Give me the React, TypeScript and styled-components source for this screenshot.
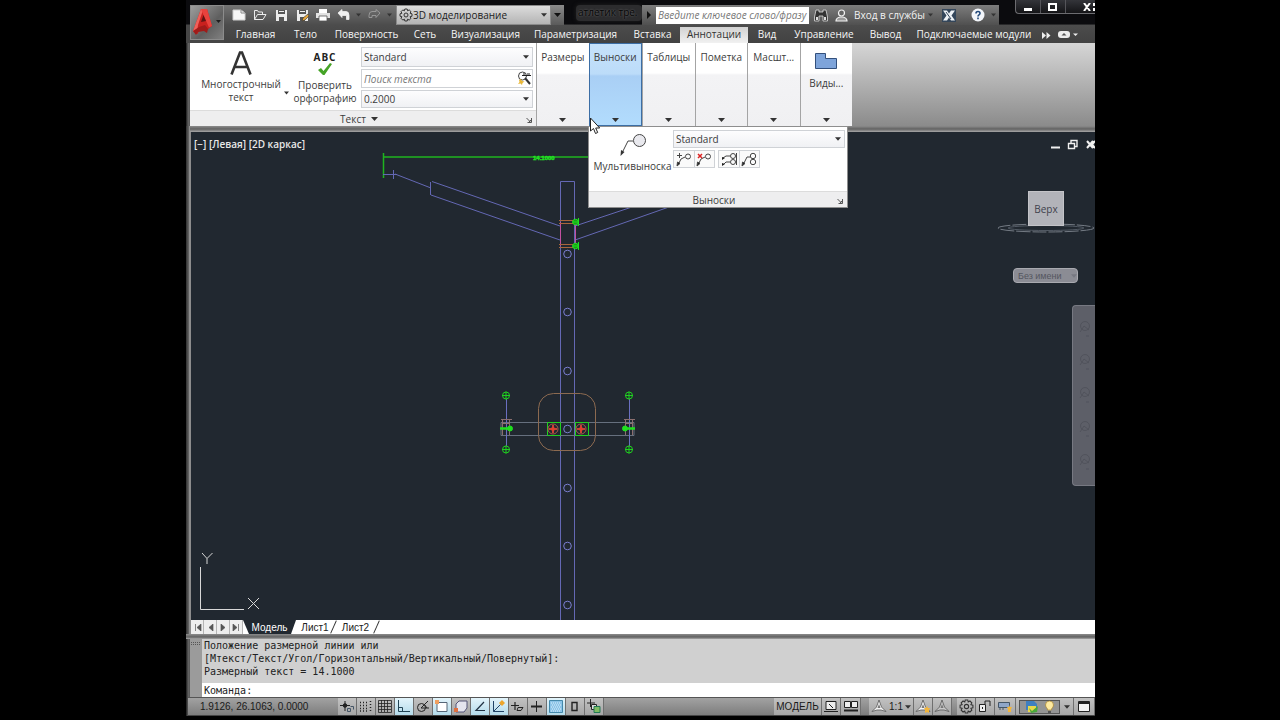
import React from "react";
import styled, { createGlobalStyle, css } from "styled-components";

const UI = `"Open Sans", "Noto Sans", sans-serif`;
const MONO = `"DejaVu Sans Mono", "Liberation Mono", monospace`;
const INK = "#3c3c3c";

const GlobalStyle = createGlobalStyle`
  * { box-sizing: border-box; }
  body { margin: 0; background: #000; font-family: ${UI}; font-size: 10px; line-height: 14px; color: ${INK}; }
  button, select, input { font: inherit; color: inherit; margin: 0; padding: 0; border: 0; background: none; border-radius: 0; }
  svg { display: block; flex: none; }
`;

const Page = styled.div`
  min-height: 100vh;
  display: flex;
  flex-direction: column;
  padding: 0 185px 4px 186px;
  background: #000;
`;

const Window = styled.main`
  flex: 1;
  display: flex;
  flex-direction: column;
  min-width: 0;
  position: relative;
  overflow: hidden;
  background: linear-gradient(90deg, #1c1c1c, #5a5a5a 2px, #6a6a6a 3px, #4a4a4a 4px);
`;

/* ---------- title bar and tabs ---------- */

const Header = styled.header`
  display: flex;
  height: 43px;
  padding: 5px 0 0 4px;
  background: linear-gradient(#0b0b0e 0, #0b0b0e 24px, #464646 25px);
`;

const AppButton = styled.button`
  width: 34px;
  height: 35px;
  flex: none;
  display: flex;
  align-items: center;
  border: 1px solid #8c8c8c;
  background: linear-gradient(135deg, #9d9d9d, #5f5f5f 60%, #808080);
`;

const HeaderRows = styled.div`
  flex: 1;
  min-width: 0;
  display: flex;
  flex-direction: column;
`;

const TitleRow = styled.div`
  height: 20px;
  display: flex;
  align-items: stretch;
`;

const QuickAccess = styled.div`
  width: 172px;
  flex: none;
  display: flex;
  align-items: center;
  gap: 7px;
  padding-left: 8px;
  background: linear-gradient(#747474, #4c4c4c);
`;

const IconButton = styled.button<{ $w?: number }>`
  width: ${(p) => p.$w ?? 14}px;
  height: 16px;
  flex: none;
  display: flex;
  align-items: center;
  justify-content: center;
`;

const SelectBox = styled.label<{ $w?: number; $h: number; $gray?: boolean; $pad?: number }>`
  position: relative;
  display: flex;
  align-items: center;
  flex: none;
  width: ${(p) => (p.$w ? `${p.$w}px` : "100%")};
  height: ${(p) => p.$h}px;
  color: ${(p) => (p.$gray ? "#222" : INK)};
  border: 1px solid ${(p) => (p.$gray ? "#8a8a8a" : "#cfd2d6")};
  background: ${(p) => (p.$gray ? "linear-gradient(#dcdcdc, #b4b4b4)" : "linear-gradient(#fdfdfe, #f0f1f4)")};
  select {
    appearance: none;
    width: 100%;
    height: 100%;
    padding-left: ${(p) => p.$pad ?? 2}px;
    outline: none;
  }
  > svg:last-child { position: absolute; right: 3px; }
  > svg:first-child:not(:last-child) { position: absolute; left: 2px; }
`;

const MoreButton = styled.button`
  width: 13px;
  flex: none;
  display: flex;
  align-items: center;
  justify-content: center;
  background: linear-gradient(#8b8b8b, #5a5a5a);
`;

const TitleText = styled.div`
  width: 66px;
  height: 16px;
  flex: none;
  margin: 0 auto 0 12px;
  padding: 0 2px;
  overflow: hidden;
  white-space: nowrap;
  background: #2c2c2e;
  color: #050505;
  border-radius: 4px;
  box-shadow: 0 0 4px #222;
  text-shadow: 0 0 2px #777;
`;

const InfoBar = styled.div`
  display: flex;
  align-items: center;
  width: 357px;
  flex: none;
  margin-right: 96px;
  color: #f2f2f2;
  background: linear-gradient(#7d7d7d, #505050);
`;

const KeywordInput = styled.input`
  width: 153px;
  flex: none;
  height: 17px;
  padding-left: 2px;
  background: #fff;
  font-style: italic;
  color: #444;
  outline: none;
  &::placeholder { color: #777; opacity: 1; }
`;

const SignIn = styled.button`
  display: flex;
  align-items: center;
  gap: 6px;
  width: 93px;
  flex: none;
  margin-left: 2px;
  white-space: nowrap;
`;

const WindowButtons = styled.div`
  position: absolute;
  right: 0;
  top: 0;
  display: flex;
  width: 80px;
  height: 14px;
  border: 1px solid #6c6c70;
  border-width: 0 0 1px 1px;
  border-radius: 0 0 0 4px;
  background: linear-gradient(#34353a, #141417);
  button { width: 25px; display: flex; align-items: center; justify-content: center; border-right: 1px solid #55555a; }
  button:last-child { flex: 1; border: 0; justify-content: flex-end; }
`;

const TabRow = styled.nav`
  display: flex;
  align-items: flex-end;
  height: 18px;
  padding-left: 4px;
  background: linear-gradient(#4c4c4c, #424242);
`;

const Tab = styled.button<{ $active?: boolean; $w: number }>`
  width: ${(p) => p.$w}px;
  flex: none;
  height: 16px;
  line-height: 14px;
  white-space: nowrap;
  display: flex;
  justify-content: center;
  color: #f6f6f6;
  ${(p) =>
    p.$active &&
    css`
      color: #333;
      background: linear-gradient(#d2d2d2, #f1f1f1);
    `}
`;

/* ---------- ribbon ---------- */

const Ribbon = styled.section`
  display: flex;
  height: 83px;
  margin-left: 4px;
  background: linear-gradient(#d6d6d6, #8b8b8b);
`;

const TextPanel = styled.div`
  width: 346px;
  flex: none;
  display: flex;
  flex-direction: column;
  background: #fff;
`;

const TextBody = styled.div`
  flex: 1;
  display: flex;
  padding: 4px 3px 0 8px;
`;

const BigButton = styled.button<{ $w: number; $top?: number }>`
  width: ${(p) => p.$w}px;
  flex: none;
  display: flex;
  flex-direction: column;
  align-items: center;
  padding-top: ${(p) => p.$top ?? 0}px;
  line-height: 13px;
  white-space: nowrap;
  > svg { margin-bottom: 3px; }
`;

const AbcText = styled.span`
  height: 11px;
  font-weight: 700;
  line-height: 11px;
  letter-spacing: 1px;
  color: #222;
`;

const SplitArrow = styled.span`
  display: flex;
  align-items: flex-end;
  width: 9px;
  padding-bottom: 15px;
`;

const FieldStack = styled.div`
  flex: 1;
  display: flex;
  flex-direction: column;
  gap: 2px;
  padding-left: 4px;
`;

const FindBox = styled.label`
  display: flex;
  align-items: center;
  height: 19px;
  border: 1px solid #cfd2d6;
  input { flex: 1; min-width: 0; padding-left: 2px; font-style: italic; outline: none; }
  input::placeholder { color: #777; opacity: 1; }
`;

const PanelTitle = styled.div`
  position: relative;
  height: 16px;
  display: flex;
  align-items: center;
  justify-content: center;
  gap: 5px;
  padding-right: 8px;
  border-top: 1px solid #dcdcdc;
  background: #eeeeef;
  > svg:last-child { position: absolute; right: 4px; bottom: 3px; }
`;

const CollapsedPanels = styled.div`
  display: flex;
  flex: none;
  width: 316px;
`;

const Collapsed = styled.button<{ $active?: boolean }>`
  flex: 1 1 0;
  min-width: 0;
  display: flex;
  flex-direction: column;
  align-items: center;
  padding: 7px 0 4px;
  white-space: nowrap;
  border-left: 1px solid #a4a4a4;
  background: linear-gradient(#fff 0, #fff 30px, #f3f3f5 32px, #f0f0f2);
  > svg:last-child { margin-top: auto; }
  ${(p) =>
    p.$active &&
    css`
      padding: 6px 0 3px;
      border: 1px solid #3c6ea5;
      background: linear-gradient(#c6e2fb 0, #bcdcf9 30px, #a9cff5 32px, #b2dcfd);
    `}
`;

const ViewsLabel = styled.span`
  display: flex;
  flex-direction: column;
  align-items: center;
  gap: 6px;
  padding-top: 2px;
`;

/* ---------- drawing area ---------- */

const Frame = styled.section`
  flex: 1;
  display: flex;
  flex-direction: column;
  padding-left: 4px;
  background: linear-gradient(90deg, #2f2f2f, #6a6a6a 3px, #b0b0b0 4px, #6a6a6a 5px);
`;

const Divider = styled.div<{ $h: number }>`
  height: ${(p) => p.$h}px;
  flex: none;
  background: linear-gradient(#8c8c8c, #626262 3px, #a8a8a8);
`;

const Canvas = styled.div`
  position: relative;
  flex: 1;
  min-height: 300px;
  margin-left: 1px;
  overflow: hidden;
  background: #212830;
`;

const DrawingSvg = styled.svg`
  position: absolute;
  inset: 0;
  width: 100%;
  height: 100%;
`;

const ViewLabel = styled.div`
  position: absolute;
  left: 3px;
  top: 5px;
  color: #e8e8e8;
  font-weight: 600;
  white-space: pre;
`;

const Ucs = styled.svg`
  position: absolute;
  left: 0;
  bottom: 0;
`;

const DocButtons = styled.div`
  position: absolute;
  right: 0;
  top: 7px;
  display: flex;
  gap: 8px;
`;

const ViewCube = styled.div`
  position: absolute;
  right: 0;
  top: 58px;
  width: 98px;
  height: 48px;
`;

const CubeFace = styled.button`
  position: absolute;
  left: 31px;
  top: 1px;
  width: 36px;
  height: 35px;
  background: #b2b3b9;
  border: 1px solid #c4c4c8;
  color: #3f424c;
`;

const ViewName = styled.button`
  position: absolute;
  right: 17px;
  top: 136px;
  width: 65px;
  height: 15px;
  padding-left: 4px;
  display: flex;
  align-items: center;
  justify-content: space-between;
  white-space: nowrap;
  font: 9px/12px "Liberation Sans", Arial, sans-serif;
  color: #54565f;
  background: #8b8c94;
  border: 1px solid #a9aab0;
  border-radius: 4px;
`;

const NavBar = styled.div`
  position: absolute;
  right: 0;
  top: 173px;
  width: 23px;
  height: 181px;
  display: flex;
  flex-direction: column;
  align-items: center;
  justify-content: space-evenly;
  background: #5d5f68;
  border: 1px solid #777982;
  border-right: 0;
  border-radius: 4px 0 0 4px;
`;

/* ---------- leader fly-out ---------- */

const Flyout = styled.div`
  position: absolute;
  left: 402px;
  top: 126px;
  width: 260px;
  height: 82px;
  display: flex;
  flex-direction: column;
  background: #fff;
  border: 1px solid #8e8e8e;
`;

const FlyoutBody = styled.div`
  flex: 1;
  display: flex;
  padding: 3px 2px 0 3px;
`;

const FlyoutRight = styled.div`
  flex: 1;
  display: flex;
  flex-direction: column;
  gap: 2px;
`;

const ToolGroup = styled.div`
  display: flex;
  gap: 3px;
  > div { display: flex; border: 1px solid #cfd2d6; background: #fafafa; }
  button + button { border-left: 1px solid #cfd2d6; }
`;

const Pointer = styled.svg`
  position: absolute;
  left: 403px;
  top: 117px;
`;

/* ---------- layout tabs, command line, status bar ---------- */

const LayoutBar = styled.nav`
  display: flex;
  height: 14px;
  flex: none;
  margin-left: 1px;
  overflow: hidden;
  background: #fff;
  font-family: "Liberation Sans", Arial, sans-serif;
  line-height: 15px;
  color: #222;
`;

const StepButton = styled.button`
  width: 13px;
  display: flex;
  align-items: center;
  justify-content: center;
  background: #eee;
  border-right: 1px solid #b5b5b5;
`;

const LayoutTab = styled.button<{ $w: number; $active?: boolean }>`
  position: relative;
  width: ${(p) => p.$w}px;
  display: flex;
  justify-content: center;
  ${(p) =>
    p.$active
      ? css`
          color: #fff;
          background: #212830;
          clip-path: polygon(0 0, 100% 0, calc(100% - 5px) 100%, 6px 100%);
        `
      : css`
          &::after {
            content: "";
            position: absolute;
            right: 0;
            top: 0;
            height: 14px;
            width: 1px;
            background: #333;
            transform: rotate(24deg);
          }
        `}
`;

const Command = styled.section`
  display: flex;
  flex: none;
  margin-left: 4px;
  font-family: ${MONO};
  line-height: 13px;
  color: #222;
  background: #d0d0d0;
`;

const Grip = styled.div`
  width: 12px;
  display: flex;
  justify-content: center;
  padding-top: 3px;
  background: #9b9b9b;
`;

const CommandText = styled.div`
  flex: 1;
  min-width: 0;
`;

const History = styled.div`
  height: 44px;
  padding: 0 0 0 2px;
  white-space: pre;
  overflow: hidden;
`;

const Prompt = styled.label`
  display: flex;
  align-items: center;
  height: 14px;
  padding-left: 2px;
  background: #fff;
  input { flex: 1; outline: none; height: 13px; }
`;

const StatusBar = styled.footer`
  display: flex;
  align-items: stretch;
  height: 19px;
  flex: none;
  margin-left: 2px;
  overflow: hidden;
  border-top: 1px solid #555;
  border-bottom: 1px solid #444;
  background: linear-gradient(#a2a2a2, #7d7d7d);
  font-family: "Liberation Sans", Arial, sans-serif;
  color: #1a1a1a;
`;

const Coordinates = styled.div`
  width: 150px;
  flex: none;
  padding-left: 12px;
  line-height: 18px;
`;

const StatusGroup = styled.div`
  display: flex;
  flex: none;
  background: linear-gradient(#c2c2c2, #a5a5a5);
`;

const StatusButton = styled.button<{ $w?: number; $on?: boolean }>`
  width: ${(p) => p.$w ?? 19}px;
  flex: none;
  display: flex;
  align-items: center;
  justify-content: center;
  gap: 2px;
  border-right: 1px solid #6f6f6f;
  background: ${(p) => (p.$on ? "linear-gradient(#e3f4fb, #b4dbea)" : "none")};
`;

const Spacer = styled.div<{ $w?: number }>`
  ${(p) => (p.$w ? `width: ${p.$w}px; flex: none;` : "flex: 1;")}
`;

const Tray = styled.div`
  display: flex;
  align-items: center;
  gap: 5px;
  width: 41px;
  margin: 2px 0 1px 3px;
  padding-left: 5px;
  border: 1px solid #555;
  background: #949494;
`;

/* ---------- icons ---------- */

const Down = ({ c = "#333", w = 7 }: { c?: string; w?: number }) => (
  <svg width={w} height="4" viewBox="0 0 7 4"><path d="M0 0h7L3.5 4z" fill={c} /></svg>
);

const Launch = () => (
  <svg width="6" height="6" viewBox="0 0 6 6" fill="none" stroke="#555"><path d="M.5 1l3.500 3.500M5.500 1v4.500H1.500M3 5l2-2" /></svg>
);

const Logo = () => (
  <svg width="33" height="33" viewBox="0 0 33 33">
    <path d="M2 25L10 3h6l5 17-5 4-3-4-5 2-1 6z" fill="#c9211e" />
    <path d="M2 25L10 3l2 1-5 15-1 8z" fill="#f0605a" />
    <path d="M10 3h6l5 17-3 1.500L12 8z" fill="#e8423d" />
    <path d="M10 16l2.500-7 2.500 6z" fill="#5e1614" />
    <path d="M2 25l6-4 6-2 3 4-1 4-3-2-6 1-2 3z" fill="#a01b19" />
    <path d="M25 14h5l-2.500 3z" fill="#1d1d1d" />
  </svg>
);

const NewFile = () => (
  <svg width="14" height="12" viewBox="0 0 14 12"><path d="M1 1h8l4 3v7H1z" fill="#f7f7f7" stroke="#d0d0d0" /><path d="M9 1v3h4" fill="none" stroke="#888" /></svg>
);
const OpenFile = () => (
  <svg width="14" height="12" viewBox="0 0 14 12" fill="none" stroke="#ececec"><path d="M1.500 10.500v-9h3l1 1.500h4v2M1.500 10.500l3-5h8.500l-3 5z" /></svg>
);
const Save = ({ pencil }: { pencil?: boolean }) => (
  <svg width="13" height="13" viewBox="0 0 13 13">
    <path d="M1 1h11v11H1z" fill="#ececec" />
    <path d="M3 1h7v4H3zM4 8h5v4H4z" fill="#555" />
    <path d="M4 2h5v1H4z" fill="#eee" />
    {pencil && <path d="M6 12l1-3 5-4 1 2-4 4z" fill="#e5a53a" stroke="#333" strokeWidth=".6" />}
  </svg>
);
const Printer = () => (
  <svg width="14" height="12" viewBox="0 0 14 12"><path d="M3 0h8v4H3z" fill="#fff" /><path d="M0 4h14v5H0z" fill="#e2e2e2" /><path d="M3 7h8v5H3z" fill="#fff" stroke="#555" strokeWidth=".8" /></svg>
);
const Undo = ({ flip, c = "#f0f0f0" }: { flip?: boolean; c?: string }) => (
  <svg width="13" height="12" viewBox="0 0 13 12">
    <path d={flip ? "M12 4L8 .5v2H4q-3 0-3 4v2h3V6.500h4v2z" : "M1 4L5 .5v2h4q3 0 3 4v4H9.500v-4H5v2z"} fill={flip ? "none" : c} stroke={c} strokeWidth=".8" />
  </svg>
);
const Gear = ({ c = "#333", s = 14 }: { c?: string; s?: number }) => (
  <svg width={s} height={s} viewBox="0 0 14 14" fill="none" stroke={c}>
    <circle cx="7" cy="7" r="2" />
    <path d="M5.800 1h2.400l.4 1.800 1.600-.9 1.800 1.800-.9 1.600 1.900.5v2.400l-1.900.5.9 1.600-1.800 1.800-1.600-.9-.4 1.800H5.800l-.4-1.800-1.600.9L2 10.300l.9-1.600L1 8.200V5.800l1.900-.5L2 3.700l1.800-1.800 1.600.9z" />
  </svg>
);
const Binoculars = () => (
  <svg width="14" height="13" viewBox="0 0 14 13"><path d="M2 1h3v2h4V1h3l1.500 7v4H9V7H5v5H.5V8z" fill="#333" stroke="#ddd" strokeWidth=".8" /><path d="M2 8h2v3H2zM10 8h2v3h-2z" fill="#ddd" /></svg>
);
const Person = () => (
  <svg width="13" height="13" viewBox="0 0 13 13"><circle cx="6.500" cy="4" r="3" fill="#666" stroke="#f2f2f2" strokeWidth="1.200" /><path d="M1 12q0-3 4-4h3q4 1 4 4z" fill="#999" stroke="#f2f2f2" strokeWidth="1.200" /></svg>
);
const Exchange = () => (
  <svg width="14" height="13" viewBox="0 0 14 13"><path d="M0 0h14v13H0z" fill="#34465a" /><path d="M1 1.500h4l2 3 2-3h4L9.500 6.500l3.500 5H9l-2-3-2 3H1l3.500-5z" fill="#eef2f6" /><path d="M4 3l5 7" stroke="#34465a" /></svg>
);
const LetterA = () => (
  <svg width="22" height="24" viewBox="0 0 22 24" fill="none" stroke="#333" strokeWidth="2.600"><path d="M1.500 23.500L10 1.500h2l8.500 22M5 16h12" /></svg>
);
const CheckMark = () => (
  <svg width="16" height="13" viewBox="0 0 16 13"><path d="M1 7l3-2 2.500 3L13 0l2 1-7.500 11H6z" fill="#45a326" /></svg>
);
const FindIcon = () => (
  <svg width="15" height="15" viewBox="0 0 15 15" fill="none">
    <circle cx="5.500" cy="5" r="4" stroke="#444" />
    <path d="M8 7l5 6" stroke="#333" strokeWidth="2" />
    <path d="M5 4.500h9M6 3h2M10 3h3" stroke="#222" strokeWidth="1.200" />
    <path d="M4 8l1 2 2.500.5L5.500 12 5 14l-1.500-1.500L1 13l1.500-2L2 9z" fill="#e8b83a" />
  </svg>
);
const ViewsIcon = () => (
  <svg width="22" height="18" viewBox="0 0 22 18"><path d="M.5 1.500h10v5h11v10H.5z" fill="#7ea4da" stroke="#33507c" /></svg>
);
const LeaderIcon = () => (
  <svg width="28" height="24" viewBox="0 0 28 24" fill="none" stroke="#444">
    <circle cx="20.500" cy="7.500" r="6" fill="#e9e9ee" /><path d="M14 8h-5L3 20" /><path d="M1.500 23l.5-6 3.500 2z" fill="#333" stroke="none" />
  </svg>
);
const SmallLeader = ({ kind }: { kind: "add" | "remove" | "align" | "collect" }) => (
  <svg width="17" height="15" viewBox="0 0 17 15" fill="none" stroke="#444">
    {kind === "add" && <><circle cx="12" cy="4.500" r="2.500" /><path d="M9 5L5 7l-3 6M1 3.500h5M3.500 1v5" /><path d="M1 14l.5-4 2.500 1.500z" fill="#222" /></>}
    {kind === "remove" && <><circle cx="12" cy="4.500" r="2.500" /><path d="M9 5L5 7l-3 6" /><path d="M1 14l.5-4 2.500 1.500z" fill="#222" /><path d="M2 2l4 4M6 2L2 6" stroke="#d22" strokeWidth="1.500" /></>}
    {kind === "align" && <><circle cx="12" cy="4" r="2.500" /><circle cx="12" cy="10" r="2.500" /><path d="M15.500 1v12M9 4H5L2 6M9 10H5l-3 3" /><path d="M1 8V5l3 1zM1 14v-3l3 1z" fill="#222" stroke="none" /></>}
    {kind === "collect" && <><circle cx="12" cy="4" r="2.700" /><circle cx="12" cy="10" r="2.700" /><path d="M9 5H6l-4 8" /><path d="M1 14l.5-4 2.500 1.500z" fill="#222" /></>}
  </svg>
);

const STATUS_ICONS: { label: string; on?: boolean; art: React.ReactNode }[] = [
  { label: "Подразумеваемые зависимости", art: <><path d="M6 2v10M1 6.500h10" /><circle cx="6" cy="6.500" r="1.800" fill="#222" /><path d="M8.500 9.500h3v3h-3zM11.500 7.500h3v3" stroke="#456" /></> },
  { label: "Привязка", art: <path d="M2 3.500h9M2 6.500h9M2 9.500h9M2 12h9M12.500 2v10" strokeDasharray="1 2" strokeWidth="1.500" /> },
  { label: "Сетка", art: <path d="M1.500 1.500h13v12h-13zM1 4.500h13M1 7.500h13M1 10.500h13M4.500 1v12M7.500 1v12M10.500 1v12" strokeWidth=".8" /> },
  { label: "Орто", on: true, art: <path d="M2.500 1v11.500H14M2.500 8.500h4v4" stroke="#245" /> },
  { label: "Отслеживание", art: <><circle cx="6.500" cy="8.500" r="4" /><path d="M6 9l7-7M6 9h8M9 5l3 4" /></> },
  { label: "Объектная привязка", on: true, art: <><path d="M3 3.500h10v9H3z" fill="#fff" stroke="#567" /><path d="M1 1h4v4H1z" fill="#f0a060" stroke="none" /></> },
  { label: "3D привязка", art: <><path d="M3 5l3-3h8v7l-3 4H3z" fill="#e4e4ee" stroke="#557" /><path d="M1 9h4v4H1z" fill="#e07040" stroke="none" /></> },
  { label: "Объектное отслеживание", on: true, art: <path d="M12 3L4 11.500h9" stroke="#234" strokeWidth="1.200" /> },
  { label: "Динамическая ПСК", on: true, art: <><path d="M2.500 2v10.500H13M2.500 12.500l7-7" stroke="#246" /><path d="M11 1l3 3-3 3-3-3z" fill="#eda62c" stroke="none" /></> },
  { label: "Динамический ввод", art: <><path d="M5 3v8M1 6.500h8" strokeWidth="1.200" /><path d="M8 8.500h5l-2 3H7z" /></> },
  { label: "Вес линий", art: <><path d="M7.500 2v11" /><path d="M2 7.500h11" strokeWidth="2" /></> },
  { label: "Прозрачность", on: true, art: <><path d="M1.500 1.500h13v12h-13z" fill="#8cc4e8" stroke="#48a" /><path d="M3 4h10M4 6h10M3 8h10M4 10h10M3 12h10" stroke="#dff1fb" strokeDasharray="1 1" /></> },
  { label: "Быстрые свойства", art: <path d="M5 3.500h5v8H5z" strokeWidth="1.400" /> },
  { label: "Циклический выбор", art: <><path d="M4.500 0v8M1 4h8" /><path d="M5.500 5.500h5v5h-5z" fill="#ddd" /><path d="M8 7.500h6v6H8z" fill="#7dbb63" stroke="#275" /></> },
];

const Art = ({ children, c = "#222" }: { children: React.ReactNode; c?: string }) => (
  <svg width="16" height="15" viewBox="0 0 16 15" fill="none" stroke={c}>{children}</svg>
);

const ScaleFigure = ({ c = "#f4f4f4", bulb }: { c?: string; bulb?: boolean }) => (
  <Art c={c}>
    <path d="M8 1L5.500 8 1 12.500 6 11h4l5 1.500L10.500 8z" fill={c} stroke="#555" strokeWidth=".8" />
    <path d="M8 5l-1.500 4h3z" fill="#777" stroke="none" />
    {bulb && <path d="M12 7l1 2h2l-1 2v3l-2-1-2 1v-3l-1-2h2z" fill="#f3b63c" stroke="none" />}
  </Art>
);

/* ---------- drawing ---------- */

const BOLTS = [254, 312, 371, 429, 488, 546, 605];

const SideGrip = ({ x, dir }: { x: number; dir: 1 | -1 }) => (
  <g>
    <path d={`M${x}.5 399v47`} stroke="#6a6fc0" />
    {[395.5, 449.500].map((y) => (
      <g key={y} stroke="#1fd01f">
        <circle cx={x} cy={y} r="3.500" /><path d={`M${x - 4} ${y}h8M${x} ${y - 4}v8`} />
      </g>
    ))}
    <path d={`M${x - 5} 419.500h11M${x - 4}.5 420v15M${x + 3}.5 420v15M${x - 4} 423.500h8`} stroke="#8c6f6f" />
    <path d={`M${x - 6 * dir} 428.500h${11 * dir}`} stroke="#1fe01f" strokeWidth="2.500" />
    <circle cx={x + 4 * dir} cy="428.500" r="2.500" fill="#1fe01f" stroke="#1fe01f" />
  </g>
);

const Drawing = () => (
  <DrawingSvg viewBox="191 132 904 488" preserveAspectRatio="xMidYMid slice" fill="none" stroke="#6468b4">
    <path d="M383.500 153v25M383 157h330" stroke="#1fb41f" strokeWidth="1.500" />
    <text x="533" y="160" fontSize="6" fontWeight="700" fill="#22e022" stroke="#22e022" strokeWidth=".4" fontFamily="Liberation Sans">14.1000</text>
    <path d="M383 174.500h14M393.500 170v9M395 174l36 14M430.500 182v13M432 181.500L560 226M431 195l129 45" />
    <path d="M575 226l57-19M575 240l94-33" />
    <path d="M560.500 620V181.500h14V620" />
    <path d="M560.500 222v24M575.500 222v24" stroke="#c250a0" />
    <path d="M559 220.500h16M559 223.500h16M559 244.500h16M559 247.500h16" stroke="#a8653c" />
    {[222, 246].map((y) => (
      <g key={y} stroke="#1fe01f"><circle cx="575.500" cy={y} r="2.800" fill="#16a016" /><path d={`M572 ${y}h7M578.500 ${y - 4}v8`} /></g>
    ))}
    {BOLTS.map((y) => <circle key={y} cx="567.500" cy={y} r="3.800" stroke="#7a7ed0" />)}
    <path d="M501 422.500h133v13H501z" stroke="#66707e" />
    <rect x="538.500" y="393.500" width="57" height="57" rx="15" stroke="#8c6a50" />
    {[553, 581].map((x) => (
      <g key={x}>
        <path d={`M${x - 6}.5 422.500h13v13h-13z`} stroke="#1fd01f" />
        <circle cx={x} cy="429" r="5" stroke="#a85a4c" />
        <path d={`M${x - 4} 429h8M${x} 425v8`} stroke="#ff4a3a" strokeWidth="1.500" />
        <circle cx={x} cy="429" r="2" fill="#e0402f" stroke="none" />
      </g>
    ))}
    <SideGrip x={506} dir={1} />
    <SideGrip x={629} dir={-1} />
  </DrawingSvg>
);

/* ---------- page ---------- */

const TABS: [string, number][] = [
  ["Главная", 55], ["Тело", 45], ["Поверхность", 77], ["Сеть", 40], ["Визуализация", 81], ["Параметризация", 99],
  ["Вставка", 55], ["Аннотации", 68], ["Вид", 38], ["Управление", 76], ["Вывод", 47], ["Подключаемые модули", 130],
];

const PANELS = ["Размеры", "Выноски", "Таблицы", "Пометка", "Масшт..."];

export default function App() {
  return (
    <Page>
      <GlobalStyle />
      <Window>
        <Header>
          <AppButton aria-label="Меню приложения"><Logo /></AppButton>
          <HeaderRows>
            <TitleRow>
              <QuickAccess>
                <IconButton aria-label="Создать"><NewFile /></IconButton>
                <IconButton aria-label="Открыть"><OpenFile /></IconButton>
                <IconButton aria-label="Сохранить"><Save /></IconButton>
                <IconButton aria-label="Сохранить как"><Save pencil /></IconButton>
                <IconButton aria-label="Печать"><Printer /></IconButton>
                <IconButton $w={24} aria-label="Отменить"><Undo /><Spacer /><Down c="#333" w={5} /></IconButton>
                <IconButton $w={24} aria-label="Повторить"><Undo flip c="#a5a5a5" /><Spacer /><Down c="#333" w={5} /></IconButton>
              </QuickAccess>
              <SelectBox $w={155} $h={20} $gray $pad={16}>
                <Gear />
                <select aria-label="Рабочее пространство"><option>3D моделирование</option></select>
                <Down w={6} />
              </SelectBox>
              <MoreButton aria-label="Настройка панели"><Down c="#111" /></MoreButton>
              <TitleText>атлетик тре.</TitleText>
              <InfoBar>
                <IconButton aria-label="Свернуть поиск"><svg width="4" height="8" viewBox="0 0 4 8"><path d="M0 0v8l4-4z" fill="#111" /></svg></IconButton>
                <KeywordInput aria-label="Поиск" placeholder="Введите ключевое слово/фразу" />
                <IconButton $w={24} aria-label="Найти"><Binoculars /></IconButton>
                <SignIn><Person />Вход в службы</SignIn>
                <Down c="#333" w={5} />
                <IconButton $w={32} aria-label="Exchange"><Exchange /></IconButton>
                <IconButton $w={26} aria-label="Справка">
                  <svg width="14" height="14" viewBox="0 0 14 14"><circle cx="7" cy="7" r="6.500" fill="#f3f6fa" /><path d="M5 5.500q0-2 2-2t2 1.800q0 1-1 1.600t-1 1.600M7 9.600v1.600" fill="none" stroke="#234a7c" strokeWidth="1.600" /></svg>
                </IconButton>
                <Down c="#333" w={5} />
              </InfoBar>
            </TitleRow>
            <TabRow>
              {TABS.map(([name, w]) => <Tab key={name} $w={w} $active={name === "Аннотации"}>{name}</Tab>)}
              <IconButton aria-label="Ещё вкладки"><svg width="9" height="7" viewBox="0 0 9 7"><path d="M0 0l4 3.500L0 7zM4.500 0l4 3.500-4 3.500z" fill="#eee" /></svg></IconButton>
              <IconButton $w={30} aria-label="Свернуть ленту"><svg width="20" height="8" viewBox="0 0 20 8"><rect width="12" height="7" rx="3" fill="#eee" /><path d="M3.500 4.500h5L6 2z" fill="#555" /><path d="M15 2.500h5L17.500 5z" fill="#eee" /></svg></IconButton>
            </TabRow>
          </HeaderRows>
        </Header>
        <WindowButtons>
          <button aria-label="Свернуть"><svg width="10" height="8"><path d="M1 5h8v3H1z" fill="#fff" /></svg></button>
          <button aria-label="Восстановить"><svg width="10" height="8"><path d="M1 1h7v6H1z" fill="none" stroke="#fff" strokeWidth="2" /></svg></button>
          <button aria-label="Закрыть"><svg width="13" height="8"><path d="M2 0l6 8M8 0L2 8M12 0v3M12 5v3" stroke="#fff" strokeWidth="2" /></svg></button>
        </WindowButtons>

        <Ribbon>
          <TextPanel>
            <TextBody>
              <BigButton $w={86} $top={4}><LetterA /><span>Многострочный</span><span>текст</span></BigButton>
              <SplitArrow><Down w={5} /></SplitArrow>
              <BigButton $w={64} $top={5}>
                <AbcText>ABC</AbcText><CheckMark /><span>Проверить</span><span>орфографию</span>
              </BigButton>
              <FieldStack>
                <SelectBox $h={20}><select aria-label="Стиль текста"><option>Standard</option></select><Down w={6} /></SelectBox>
                <FindBox><input aria-label="Поиск текста" placeholder="Поиск текста" /><FindIcon /></FindBox>
                <SelectBox $h={18}><select aria-label="Высота текста"><option>0.2000</option></select><Down w={6} /></SelectBox>
              </FieldStack>
            </TextBody>
            <PanelTitle>Текст <Down /><Launch /></PanelTitle>
          </TextPanel>
          <CollapsedPanels>
            {PANELS.map((name) => (
              <Collapsed key={name} $active={name === "Выноски"}>{name}<Down /></Collapsed>
            ))}
            <Collapsed>
              <ViewsLabel><ViewsIcon />Виды...</ViewsLabel><Down />
            </Collapsed>
          </CollapsedPanels>
        </Ribbon>

        <Frame>
          <Divider $h={6} />
          <Canvas>
            <Drawing />
            <ViewLabel>[−] [Левая] [2D каркас]</ViewLabel>
            <DocButtons>
              <svg width="44" height="12" viewBox="0 0 44 12" fill="none" stroke="#f0f0f0">
                <path d="M0 8.500h9" strokeWidth="2" />
                <path d="M17.500 4.500h6v5h-6zM20 4V1.500h6v6h-2" strokeWidth="1.400" />
                <path d="M36 2l6 7M42 2l-6 7M44 2l-3 3.500 3 3.500" strokeWidth="2" />
              </svg>
            </DocButtons>
            <ViewCube>
              <svg width="98" height="48" viewBox="0 0 98 48" fill="none" stroke="#747b84">
                <ellipse cx="49" cy="38" rx="48" ry="4" strokeDasharray="14 2" />
                <ellipse cx="49" cy="38" rx="38" ry="2.500" stroke="#525a64" />
              </svg>
              <CubeFace>Верх</CubeFace>
            </ViewCube>
            <ViewName>Без имени <Down c="#777982" w={6} /></ViewName>
            <NavBar>
              {[0, 1, 2, 3, 4].map((i) => (
                <svg key={i} width="14" height="20" viewBox="0 0 14 20" fill="none" stroke="#51535c"><circle cx="8" cy="7" r="4.500" /><path d="M3 13l4-6 5 4M9 17h3" /></svg>
              ))}
            </NavBar>
            <Ucs width="80" height="72" viewBox="0 0 80 72" fill="none" stroke="#d8d8d8">
              <path d="M9.500 19v42.500H53M11 5l5 5.500L21.500 5M16 10.500V16M57 50l11 11M68 50L57 61" />
            </Ucs>
          </Canvas>
          <LayoutBar>
            {["M2.500 0v7M8 0v7L4 3.500z", "M7 0v7L3 3.500z", "M2 0v7l4-3.500z", "M1 0v7l4-3.500zM6.500 0v7"].map((d, i) => (
              <StepButton key={d} aria-label={["Первый лист", "Предыдущий лист", "Следующий лист", "Последний лист"][i]}>
                <svg width="9" height="7" viewBox="0 0 9 7"><path d={d} fill="#555" stroke="#555" strokeWidth=".7" /></svg>
              </StepButton>
            ))}
            <LayoutTab $active $w={53}>Модель</LayoutTab>
            <LayoutTab $w={38}>Лист1</LayoutTab>
            <LayoutTab $w={43}>Лист2</LayoutTab>
          </LayoutBar>
        </Frame>

        <Divider $h={5} />
        <Command>
          <Grip><svg width="10" height="3" viewBox="0 0 10 3"><path d="M0 .5h10M0 2.500h10" stroke="#555" strokeDasharray="1 1" /></svg></Grip>
          <CommandText>
            <History>{"Положение размерной линии или\n[Мтекст/Текст/Угол/Горизонтальный/Вертикальный/Повернутый]:\nРазмерный текст = 14.1000"}</History>
            <Prompt>Команда: <input aria-label="Командная строка" /></Prompt>
          </CommandText>
        </Command>
        <StatusBar>
          <Coordinates>1.9126, 26.1063, 0.0000</Coordinates>
          <StatusGroup>
            {STATUS_ICONS.map((s) => <StatusButton key={s.label} aria-label={s.label} $on={s.on}><Art>{s.art}</Art></StatusButton>)}
          </StatusGroup>
          <Spacer />
          <StatusGroup>
            <StatusButton $w={48}>МОДЕЛЬ</StatusButton>
            <StatusButton $w={19} aria-label="Лист"><Art><path d="M3 2.500h10v8H3zM1 12.500h14" fill="#eee" /><path d="M6 5l4 4" /></Art></StatusButton>
            <StatusButton $w={20} aria-label="Быстрый просмотр"><Art><path d="M1.500 2.500h6v6h-6zM8.500 2.500h6v6h-6z" fill="#eee" /><path d="M1 11.500h14" strokeWidth="2" /></Art></StatusButton>
          </StatusGroup>
          <Spacer $w={8} />
          <StatusGroup>
            <StatusButton $w={45}><ScaleFigure />1:1<Down w={6} /></StatusButton>
            <StatusButton aria-label="Видимость аннотаций"><ScaleFigure bulb /></StatusButton>
            <StatusButton aria-label="Автомасштаб"><ScaleFigure c="#c8c8c8" /></StatusButton>
          </StatusGroup>
          <Spacer $w={5} />
          <StatusGroup>
            <StatusButton aria-label="Рабочие пространства"><Gear s={15} /></StatusButton>
            <StatusButton aria-label="Закрепление"><Art><path d="M2.500 5.500h6v7h-6z" fill="#eee" /><path d="M8 5V2h5v5M5.500 8v2" /></Art></StatusButton>
            <StatusButton $w={21} aria-label="Аппаратное ускорение"><Art><path d="M1.500 3.500h11v5h-11zM3 9v2M6 9v2" fill="#8fa6c8" stroke="#456" /><path d="M12 6l1 2h2l-1 2v3h-3v-3l-1-2h2z" fill="#f3b63c" stroke="none" /></Art></StatusButton>
            <Tray>
              <svg width="14" height="14" viewBox="0 0 14 14"><path d="M1 1h8l3 3v6H1z" fill="#3f7fc0" /><path d="M3 6h8v6H3z" fill="#e8d84a" /><path d="M4 8l3 3 6-5-1 6-6 1z" fill="#4aa83c" /></svg>
              <svg width="11" height="14" viewBox="0 0 11 14"><path d="M5.500 1q4 0 4 4 0 2-2 4v1h-4V9q-2-2-2-4 0-4 4-4z" fill="#ffeaa0" stroke="#a88430" strokeWidth=".7" /><path d="M4 11h3v2H4z" fill="#555" /></svg>
            </Tray>
            <StatusButton $w={14} aria-label="Меню строки состояния"><Down w={6} /></StatusButton>
            <StatusButton $w={21} aria-label="Очистить экран"><Art><path d="M2.500 2.500h11v10h-11z" fill="#f4f4f4" /><path d="M2 4h12" strokeWidth="2" /></Art></StatusButton>
          </StatusGroup>
        </StatusBar>

        <Flyout>
          <FlyoutBody>
            <BigButton $w={81} $top={3}><LeaderIcon /><span>Мультивыноска</span></BigButton>
            <FlyoutRight>
              <SelectBox $h={18}><select aria-label="Стиль мультивыноски"><option>Standard</option></select><Down w={6} /></SelectBox>
              <ToolGroup>
                <div>
                  <IconButton $w={20} aria-label="Добавить выноску"><SmallLeader kind="add" /></IconButton>
                  <IconButton $w={20} aria-label="Удалить выноску"><SmallLeader kind="remove" /></IconButton>
                </div>
                <div>
                  <IconButton $w={20} aria-label="Выровнять"><SmallLeader kind="align" /></IconButton>
                  <IconButton $w={20} aria-label="Собрать"><SmallLeader kind="collect" /></IconButton>
                </div>
              </ToolGroup>
            </FlyoutRight>
          </FlyoutBody>
          <PanelTitle>Выноски<Launch /></PanelTitle>
        </Flyout>
        <Pointer width="12" height="18" viewBox="0 0 12 18"><path d="M1.500 1v13l3-2.500 2 5 2.200-1-2-4.500h4z" fill="#fff" stroke="#222" /></Pointer>
      </Window>
    </Page>
  );
}
